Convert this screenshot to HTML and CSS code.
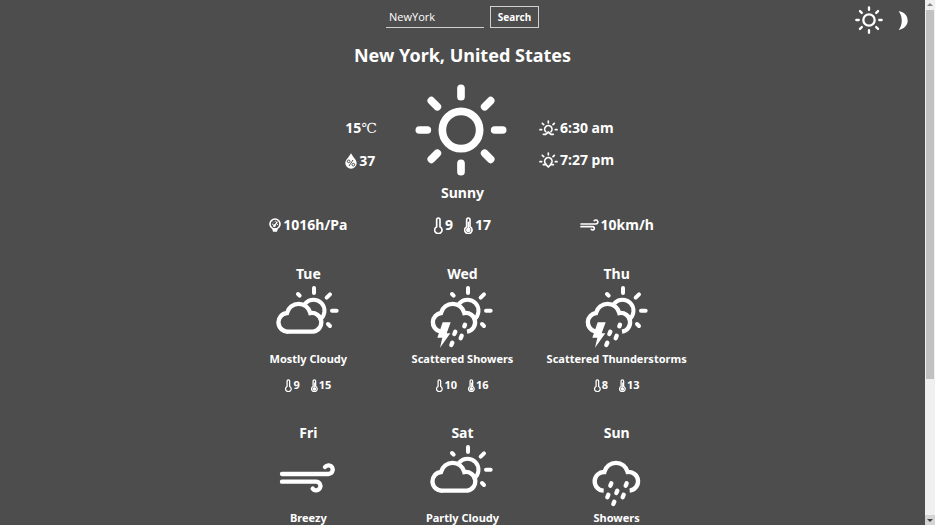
FILE: index.html
```html
<!DOCTYPE html>
<html lang="en">
<head>
<meta charset="utf-8">
<title>Weather</title>
<link rel="stylesheet" href="styles.css">
</head>
<body>
<svg class="sprite" aria-hidden="true">
  <symbol id="sun" viewBox="0 0 276 276">
    <g fill="none" stroke="currentColor" stroke-width="23" stroke-linecap="round">
      <circle cx="138" cy="138" r="56"/>
      <path d="M138 13V38M138 238V263M13 138H37M239 138H263M49 50L67 68M227 50L209 68M49 226L67 208M227 226L209 208"/>
    </g>
  </symbol>
  <symbol id="moon" viewBox="0 0 28 57">
    <path fill="currentColor" d="M1 1C17 2 28 14 28 29C28 43 16 54 1 57C13 42 14 18 1 1Z"/>
  </symbol>
  <symbol id="part-sun" viewBox="0 0 192 192">
    <path fill="none" stroke="currentColor" stroke-width="12" stroke-linecap="round" d="M88 55A33 33 0 1 1 133 103M114 9V24M152 38L162 28M168 77H182M156 117L162 123M66 27L71 32"/>
  </symbol>
  <symbol id="cloudy" viewBox="0 0 192 192">
    <use href="#part-sun"/>
    <path fill="none" stroke="currentColor" stroke-width="13" d="M38 140A28 28 0 0 1 33 84A36 36 0 0 1 103 84A28 28 0 1 1 112 140Z"/>
  </symbol>
  <symbol id="storm" viewBox="0 0 192 192">
    <use href="#part-sun"/>
    <path fill="none" stroke="currentColor" stroke-width="13" d="M30 139A28 28 0 0 1 33 84A36 36 0 0 1 103 84A28 28 0 1 1 111 140"/>
    <path fill="currentColor" d="M38 112H62L50 145H61L30 188L37 158H22Z"/>
    <path fill="none" stroke="currentColor" stroke-width="13" stroke-linecap="round" d="M105 119L103 124M76 140L73 147M95 152L92 160M67 173L64 180"/>
  </symbol>
  <symbol id="showers" viewBox="0 0 192 192">
    <path fill="none" stroke="currentColor" stroke-width="13" d="M56 140A28 28 0 1 1 58 84A36 36 0 0 1 128 84A28 28 0 1 1 134 140"/>
    <path fill="none" stroke="currentColor" stroke-width="13" stroke-linecap="round" d="M79 118L76 125M125 118L122 125M97 140L94 147M70 152L67 160M116 152L113 160M88 173L85 180"/>
  </symbol>
  <symbol id="breezy" viewBox="0 0 192 192">
    <path fill="none" stroke="currentColor" stroke-width="13" stroke-linecap="round" stroke-linejoin="round" d="M18 90H157A13 13 0 1 0 147 69M18 113H120A13 13 0 1 1 110 134"/>
  </symbol>
  <symbol id="wind" viewBox="0 0 57 36">
    <path fill="none" stroke="currentColor" stroke-width="5" stroke-linecap="round" d="M3 15H47A6 6 0 1 0 43 5M3 23H38A5 5 0 1 1 34 31"/>
  </symbol>
  <symbol id="low" viewBox="0 0 27 51">
    <path fill="none" stroke="currentColor" stroke-width="5" d="M8 29V8A5 5 0 0 1 18 8V29A11 11 0 1 1 8 29Z"/>
  </symbol>
  <symbol id="high" viewBox="0 0 27 51">
    <path fill="none" stroke="currentColor" stroke-width="5" d="M8 29V8A5 5 0 0 1 18 8V29A11 11 0 1 1 8 29Z"/>
    <path fill="none" stroke="currentColor" stroke-width="4" d="M13 14V34"/>
    <circle cx="13" cy="39" r="7" fill="currentColor"/>
  </symbol>
  <symbol id="humidity" viewBox="0 0 36 48">
    <path fill="currentColor" d="M18 1C24 12 35 21 35 31A17 16 0 0 1 1 31C1 21 12 12 18 1Z"/>
    <g fill="none" stroke="#4d4d4d" stroke-width="3"><circle cx="11" cy="25" r="4"/><circle cx="25" cy="35" r="4"/><path d="M24 21L12 39"/></g>
  </symbol>
  <symbol id="barometer" viewBox="0 0 36 42">
    <circle cx="18" cy="18" r="15" fill="none" stroke="currentColor" stroke-width="5"/>
    <path fill="currentColor" d="M9 31H27L24 41H12Z"/>
    <path fill="none" stroke="currentColor" stroke-width="3" d="M9 19L12 18M12 11L14 13M19 8V11M27 19H24"/>
    <path fill="none" stroke="currentColor" stroke-width="4" d="M15 26L25 11"/>
    <circle cx="16" cy="23" r="4" fill="currentColor"/>
  </symbol>
  <symbol id="sunrise" viewBox="0 0 57 48">
    <path fill="none" stroke="currentColor" stroke-width="5" stroke-linecap="round" stroke-linejoin="round" d="M28 3V9M10 10L14 14M46 10L42 14M3 29H8M49 29H54M20 35A11 11 0 1 1 36 35M13 43H20L28 36L36 43H43"/>
  </symbol>
  <symbol id="sunset" viewBox="0 0 57 48">
    <path fill="none" stroke="currentColor" stroke-width="5" stroke-linecap="round" stroke-linejoin="round" d="M28 3V9M10 10L14 14M46 10L42 14M3 29H8M49 29H54M20 35A11 11 0 1 1 36 35M13 38H21L28 45L35 38H43"/>
  </symbol>
</svg>

<div class="page">
  <header class="topbar">
    <form class="search" onsubmit="return false">
      <input class="search-input" type="text" value="NewYork" aria-label="City">
      <button class="search-button" type="submit">Search</button>
    </form>
    <div class="themes">
      <button class="theme-button" type="button" aria-label="Light theme"><svg class="theme-sun"><use href="#sun"/></svg></button>
      <button class="theme-button" type="button" aria-label="Dark theme"><svg class="theme-moon"><use href="#moon"/></svg></button>
    </div>
  </header>

  <main class="weather">
    <h1 class="city">New York, United States</h1>
    <section class="current">
      <div class="side side-left">
        <p class="stat"><span>15<span class="unit">℃</span></span></p>
        <p class="stat"><svg class="icon-drop"><use href="#humidity"/></svg>37</p>
      </div>
      <svg class="current-icon"><use href="#sun"/></svg>
      <div class="side">
        <p class="stat"><svg class="icon-horizon"><use href="#sunrise"/></svg>6:30 am</p>
        <p class="stat"><svg class="icon-horizon"><use href="#sunset"/></svg>7:27 pm</p>
      </div>
    </section>
    <p class="condition">Sunny</p>
    <section class="columns details">
      <p class="stat"><svg class="icon-gauge"><use href="#barometer"/></svg>1016h/Pa</p>
      <p class="range"><span class="stat"><svg class="icon-temp"><use href="#low"/></svg>9</span><span class="stat"><svg class="icon-temp"><use href="#high"/></svg>17</span></p>
      <p class="stat"><svg class="icon-wind"><use href="#wind"/></svg>10km/h</p>
    </section>

    <section class="columns forecast">
      <article class="day">
        <h2 class="day-name">Tue</h2>
        <svg class="day-icon"><use href="#cloudy"/></svg>
        <p class="day-text">Mostly Cloudy</p>
        <p class="range small"><span class="stat"><svg class="icon-temp"><use href="#low"/></svg>9</span><span class="stat"><svg class="icon-temp"><use href="#high"/></svg>15</span></p>
      </article>
      <article class="day">
        <h2 class="day-name">Wed</h2>
        <svg class="day-icon"><use href="#storm"/></svg>
        <p class="day-text">Scattered Showers</p>
        <p class="range small"><span class="stat"><svg class="icon-temp"><use href="#low"/></svg>10</span><span class="stat"><svg class="icon-temp"><use href="#high"/></svg>16</span></p>
      </article>
      <article class="day">
        <h2 class="day-name">Thu</h2>
        <svg class="day-icon"><use href="#storm"/></svg>
        <p class="day-text">Scattered Thunderstorms</p>
        <p class="range small"><span class="stat"><svg class="icon-temp"><use href="#low"/></svg>8</span><span class="stat"><svg class="icon-temp"><use href="#high"/></svg>13</span></p>
      </article>
      <article class="day">
        <h2 class="day-name">Fri</h2>
        <svg class="day-icon"><use href="#breezy"/></svg>
        <p class="day-text">Breezy</p>
      </article>
      <article class="day">
        <h2 class="day-name">Sat</h2>
        <svg class="day-icon"><use href="#cloudy"/></svg>
        <p class="day-text">Partly Cloudy</p>
      </article>
      <article class="day">
        <h2 class="day-name">Sun</h2>
        <svg class="day-icon"><use href="#showers"/></svg>
        <p class="day-text">Showers</p>
      </article>
    </section>
  </main>
</div>

<div class="scrollbar" aria-hidden="true">
  <svg class="arrow" viewBox="0 0 10 10"><path fill="#858585" d="M5 3L8 6H2Z"/></svg>
  <div class="track"><div class="thumb"></div></div>
  <svg class="arrow arrow-down" viewBox="0 0 10 10"><path fill="#404040" d="M5 7L8 4H2Z"/></svg>
</div>
</body>
</html>
```
FILE: styles.css
```css
* {
  box-sizing: border-box;
}

body {
  margin: 0;
  display: flex;
  height: 100vh;
  overflow: hidden;
  background: #4d4d4d;
  color: #fff;
  font-family: "Noto Sans", "Open Sans", sans-serif;
  font-size: 14px;
  font-weight: 700;
  line-height: 24px;
}

h1,
h2,
p {
  margin: 0;
  font-weight: 700;
}

svg {
  display: block;
  flex: none;
}

.sprite {
  position: absolute;
  width: 0;
  height: 0;
}

.page {
  flex: 1;
  min-width: 0;
}

.topbar {
  position: relative;
  padding-top: 6px;
}

.search {
  display: flex;
  justify-content: center;
  gap: 6px;
}

.search-input {
  width: 98px;
  height: 22px;
  padding: 0 3px;
  border: 0;
  border-bottom: 1px solid #d0d0d0;
  background: transparent;
  color: #fff;
  font: 400 11px "Open Sans", "Noto Sans", sans-serif;
  outline: none;
}

.search-button {
  width: 49px;
  height: 22px;
  padding: 0;
  border: 1px solid #d0d0d0;
  background: transparent;
  color: #fff;
  font: 700 10px "Noto Sans", "Open Sans", sans-serif;
}

.themes {
  position: absolute;
  top: 6px;
  right: 17px;
  display: flex;
  align-items: center;
  gap: 15px;
}

.theme-button {
  padding: 0;
  border: 0;
  background: none;
  color: #fff;
}

.theme-sun {
  width: 28px;
  height: 28px;
}

.theme-moon {
  width: 10px;
  height: 19px;
}

.city {
  margin-top: 13px;
  font-size: 18px;
  line-height: 28px;
  text-align: center;
}

.current {
  display: grid;
  grid-template-columns: 1fr auto 1fr;
  align-items: center;
  column-gap: 32px;
  margin-top: 15px;
  padding-right: 3px;
}

.current-icon {
  width: 92px;
  height: 92px;
}

.side {
  display: grid;
  row-gap: 8px;
  padding-top: 28px;
}

.side-left {
  justify-self: end;
  padding-right: 6px;
}

.stat {
  display: flex;
  align-items: center;
  gap: 2px;
}

.unit {
  font-family: "Liberation Serif", "DejaVu Serif", serif;
  font-weight: 400;
}

.condition {
  margin-top: 5px;
  text-align: center;
}

.columns {
  display: grid;
  grid-template-columns: repeat(3, 1fr);
  width: 50%;
  margin: 0 auto;
  justify-items: center;
}

.details {
  margin-top: 8px;
}

.range {
  display: flex;
  gap: 11px;
}

.icon-drop {
  width: 12px;
  height: 16px;
}

.icon-horizon {
  width: 19px;
  height: 16px;
}

.icon-gauge {
  width: 12px;
  height: 14px;
}

.icon-temp {
  width: 9px;
  height: 17px;
}

.icon-wind {
  width: 19px;
  height: 12px;
}

.forecast {
  margin-top: 25px;
  row-gap: 28px;
}

.day {
  display: flex;
  flex-direction: column;
  align-items: center;
  white-space: nowrap;
}

.day-name {
  font-size: 14px;
  line-height: 23px;
}

.day-icon {
  width: 64px;
  height: 64px;
}

.day-text {
  margin-top: 2px;
  font-size: 11px;
  line-height: 16px;
}

.small {
  margin-top: 10px;
  font-size: 11px;
  line-height: 16px;
}

.small .stat {
  gap: 1px;
}

.small .icon-temp {
  width: 7px;
  height: 13px;
}

.scrollbar {
  display: flex;
  flex-direction: column;
  width: 10px;
  background: #f0f0f0;
}

.arrow {
  width: 10px;
  height: 10px;
}

.arrow-down {
  background: #d4d4d4;
}

.track {
  flex: 1;
  padding: 0 1px;
}

.thumb {
  height: 73%;
  background: #c1c1c1;
}
```
